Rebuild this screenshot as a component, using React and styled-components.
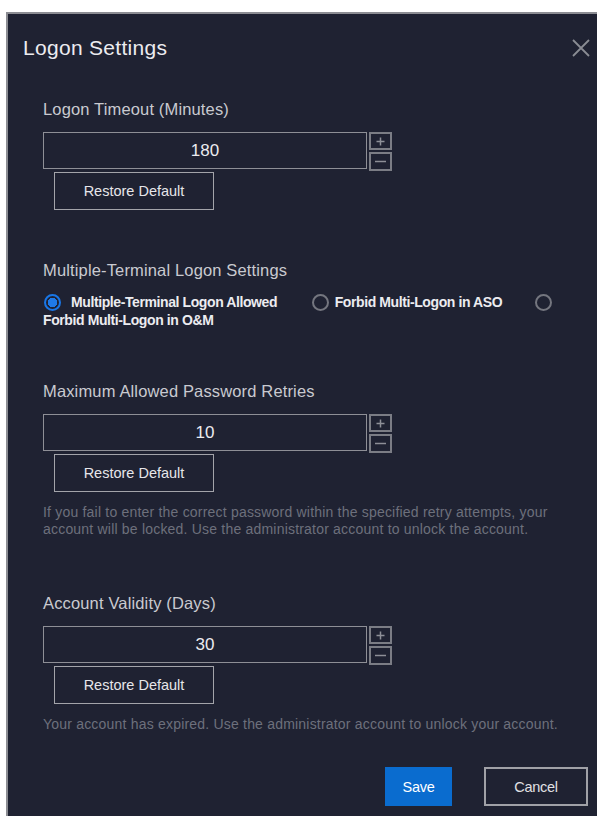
import React from "react";
import styled, { createGlobalStyle } from "styled-components";

const GlobalStyle = createGlobalStyle`
  html, body {
    margin: 0;
    padding: 0;
    background: #ffffff;
  }
  body {
    font-family: "Liberation Sans", Arial, sans-serif;
  }
`;

const Dialog = styled.section`
  margin: 12px 0 0 6px;
  min-height: 804px;
  box-sizing: border-box;
  background: #1f2232;
  border-top: 2px solid #8c8d93;
  border-left: 2px solid #8c8d93;
  color: #d0d0d4;
`;

const Header = styled.header`
  display: flex;
  align-items: center;
  justify-content: space-between;
  height: 68px;
  padding: 0 4px 0 15px;
`;

const Title = styled.h1`
  margin: 0;
  font-size: 21px;
  font-weight: 400;
  color: #ececf0;
  letter-spacing: 0.3px;
`;

const CloseButton = styled.button`
  width: 24px;
  height: 24px;
  padding: 0;
  border: 0;
  background: transparent;
  display: flex;
  align-items: center;
  justify-content: center;
  cursor: pointer;
`;

const Body = styled.div`
  padding: 17px 8px 0 35px;
`;

const Section = styled.div`
  margin-top: ${(p) => p.$gap || 0}px;
`;

const Label = styled.div`
  font-size: 16.5px;
  color: #c9cad0;
  line-height: 20px;
  letter-spacing: 0.15px;
`;

const FieldRow = styled.div`
  display: flex;
  align-items: flex-start;
  height: 37px;
  margin-top: 13px;
`;

const NumberBox = styled.div`
  width: 324px;
  height: 37px;
  box-sizing: border-box;
  border: 1px solid #8e8f96;
  display: flex;
  align-items: center;
  justify-content: center;
  font-size: 17px;
  color: #ebebef;
`;

const Stepper = styled.div`
  display: flex;
  flex-direction: column;
  gap: 2px;
  margin-left: 2px;
`;

const StepButton = styled.button`
  width: 23px;
  height: ${(p) => p.$h}px;
  box-sizing: border-box;
  padding: 0;
  border: 2px solid #7b7d85;
  background: transparent;
  display: flex;
  align-items: center;
  justify-content: center;
`;

const RestoreButton = styled.button`
  display: block;
  margin: 3px 0 0 11px;
  width: 160px;
  height: 38px;
  box-sizing: border-box;
  border: 1px solid #a3a4aa;
  background: transparent;
  color: #e6e6ea;
  font-family: inherit;
  font-size: 14.5px;
  letter-spacing: 0;
`;

const Hint = styled.p`
  margin: 12px 0 0;
  font-size: 14px;
  line-height: 17px;
  color: #6d707c;
  letter-spacing: 0.2px;
`;

const RadioGroup = styled.div`
  margin-top: 13px;
  font-size: 14px;
  font-weight: 700;
  line-height: 18px;
  color: #ececf0;
  letter-spacing: -0.4px;
`;

const Option = styled.label`
  display: inline;
`;

const OptionText = styled.span`
  display: inline-block;
  white-space: nowrap;
  margin-right: ${(p) => p.$after || 0}px;
`;

const RadioDot = styled.span`
  display: inline-block;
  width: 17px;
  height: 17px;
  box-sizing: border-box;
  border-radius: 50%;
  vertical-align: -4px;
  margin: 0 ${(p) => p.$space}px 0 1px;
  border: 2px solid ${(p) => (p.$on ? "#1976e6" : "#74767f")};
  background: ${(p) => (p.$on ? "radial-gradient(circle, #1f7ae8 0 4.5px, transparent 5px)" : "transparent")};
`;

const Footer = styled.div`
  display: flex;
  justify-content: flex-end;
  gap: 32px;
  margin-top: 34px;
  padding-right: 1px;
`;

const FooterButton = styled.button`
  height: 39px;
  box-sizing: border-box;
  width: ${(p) => p.$w}px;
  font-family: inherit;
  font-size: 14.5px;
  letter-spacing: -0.3px;
  color: ${(p) => (p.$primary ? "#ffffff" : "#e0e0e4")};
  background: ${(p) => (p.$primary ? "#0a6ccf" : "transparent")};
  border: ${(p) => (p.$primary ? "0" : "2px solid #a0a1a7")};
`;

const PlusIcon = () => (
  <svg width="11" height="11" viewBox="0 0 11 11">
    <path d="M5.5 1.5v8M1.5 5.5h8" stroke="#8d8f97" strokeWidth="1.5" />
  </svg>
);

const MinusIcon = () => (
  <svg width="13" height="11" viewBox="0 0 13 11">
    <path d="M1 5.5h11" stroke="#8d8f97" strokeWidth="1.5" />
  </svg>
);

const NumberField = ({ value }) => (
  <>
    <FieldRow>
      <NumberBox>{value}</NumberBox>
      <Stepper>
        <StepButton $h={18} aria-label="increase">
          <PlusIcon />
        </StepButton>
        <StepButton $h={19} aria-label="decrease">
          <MinusIcon />
        </StepButton>
      </Stepper>
    </FieldRow>
    <RestoreButton>Restore Default</RestoreButton>
  </>
);

export default function App() {
  return (
    <>
      <GlobalStyle />
      <Dialog>
        <Header>
          <Title>Logon Settings</Title>
          <CloseButton aria-label="close">
            <svg width="20" height="20" viewBox="0 0 20 20">
              <path d="M2 2l16 16M18 2L2 18" stroke="#8a8c94" strokeWidth="1.8" />
            </svg>
          </CloseButton>
        </Header>
        <Body>
          <Section>
            <Label>Logon Timeout (Minutes)</Label>
            <NumberField value="180" />
          </Section>

          <Section $gap={50}>
            <Label>Multiple-Terminal Logon Settings</Label>
            <RadioGroup>
              <Option>
                <RadioDot $on $space={10} />
                <OptionText $after={30}>Multiple-Terminal Logon Allowed</OptionText>
              </Option>{" "}
              <Option>
                <RadioDot $space={6} />
                <OptionText $after={28}>Forbid Multi-Logon in ASO</OptionText>
              </Option>{" "}
              <Option>
                <RadioDot $space={6} />
                <OptionText>Forbid Multi-Logon in O&amp;M</OptionText>
              </Option>
            </RadioGroup>
          </Section>

          <Section $gap={52}>
            <Label>Maximum Allowed Password Retries</Label>
            <NumberField value="10" />
            <Hint>
              If you fail to enter the correct password within the specified retry attempts, your
              account will be locked. Use the administrator account to unlock the account.
            </Hint>
          </Section>

          <Section $gap={55}>
            <Label>Account Validity (Days)</Label>
            <NumberField value="30" />
            <Hint>Your account has expired. Use the administrator account to unlock your account.</Hint>
          </Section>

          <Footer>
            <FooterButton $primary $w={67}>Save</FooterButton>
            <FooterButton $w={104}>Cancel</FooterButton>
          </Footer>
        </Body>
      </Dialog>
    </>
  );
}
